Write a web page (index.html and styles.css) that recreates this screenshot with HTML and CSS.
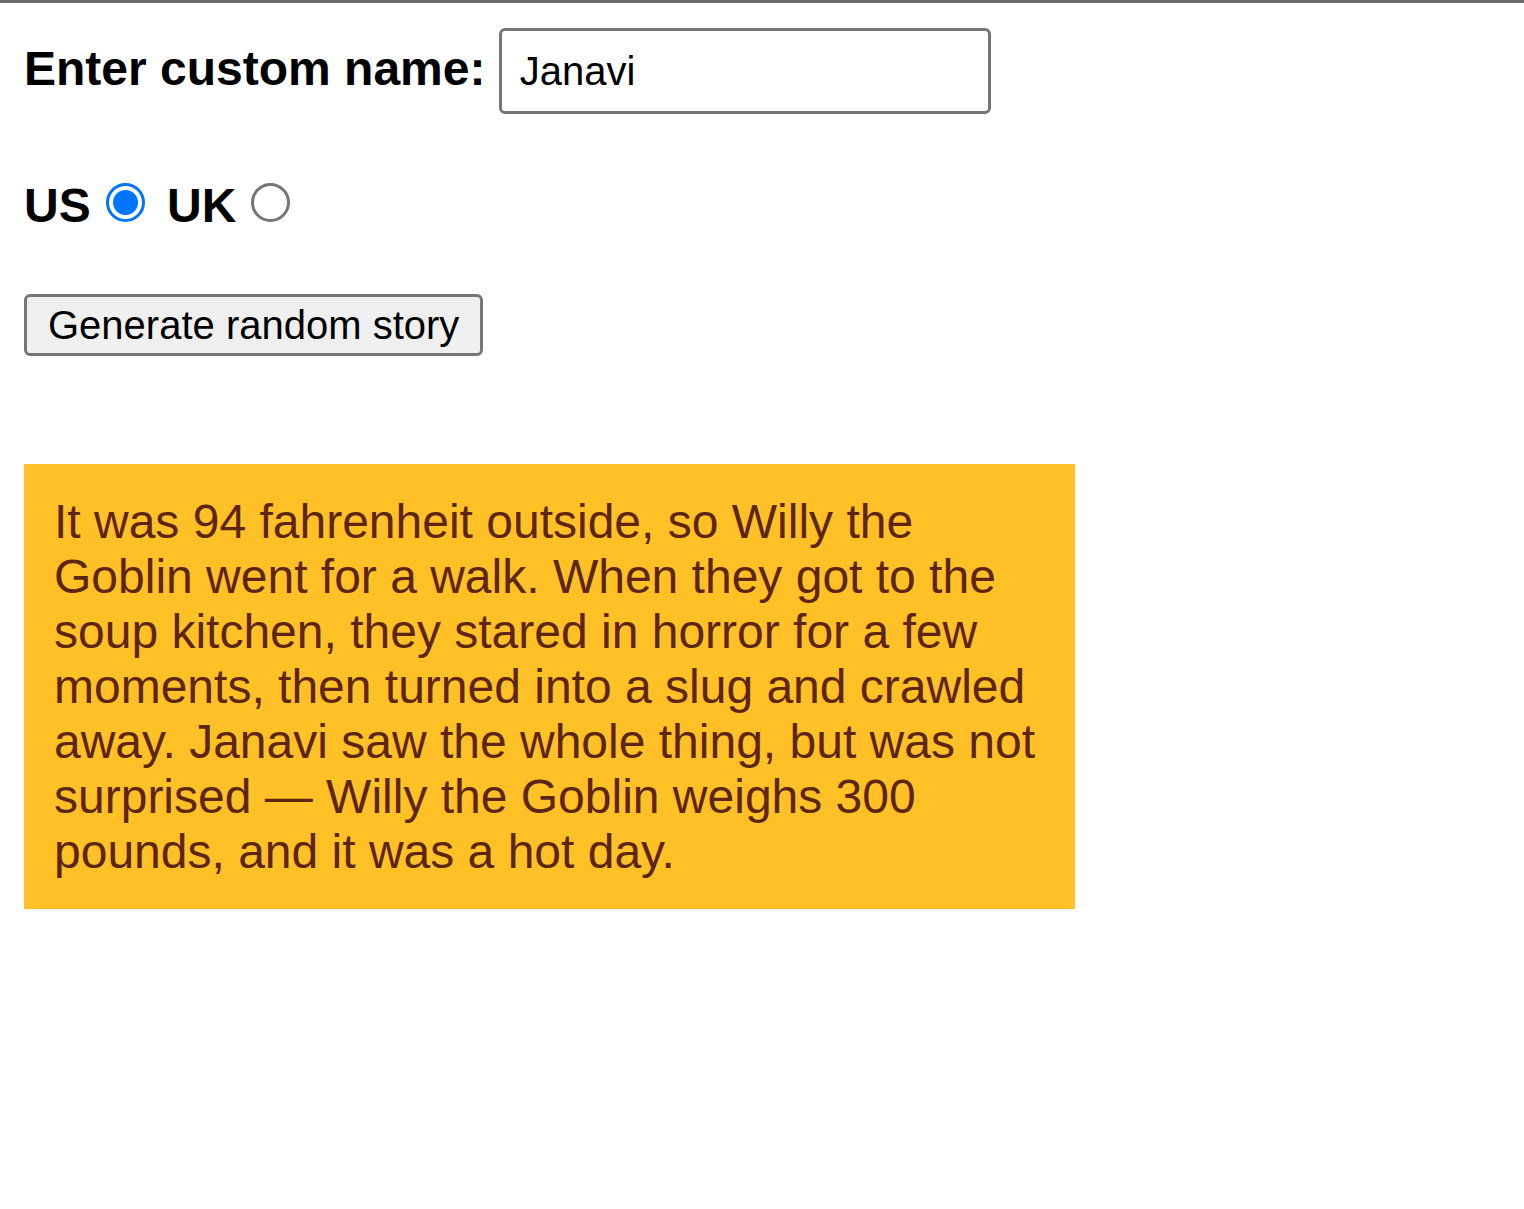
FILE: index.html
```html
<!DOCTYPE html>
<html lang="en">
<head>
<meta charset="utf-8">
<title>Silly story generator</title>
<link rel="stylesheet" href="styles.css">
</head>
<body>
<div class="row">
  <label class="lbl" for="customname">Enter custom name:</label>
  <input class="name-input" id="customname" type="text" value="Janavi">
</div>
<div class="row radios">
  <label class="lbl" for="us">US</label><input class="radio" id="us" type="radio" name="ukus" value="us" checked>
  <label class="lbl" for="uk">UK</label><input class="radio" id="uk" type="radio" name="ukus" value="uk">
</div>
<div class="row">
  <button class="randomize" type="button">Generate random story</button>
</div>
<p class="story">It was 94 fahrenheit outside, so Willy the Goblin went for a walk. When they got to the soup kitchen, they stared in horror for a few moments, then turned into a slug and crawled away. Janavi saw the whole thing, but was not surprised — Willy the Goblin weighs 300 pounds, and it was a hot day.</p>
</body>
</html>
```
FILE: styles.css
```css
html {
  border-top: 3px solid #6b6b6b;
  background: #fff;
}
body {
  margin: 25px 24px 24px;
  width: 1051px;
  font-family: "Liberation Sans", Arial, Helvetica, sans-serif;
  font-size: 48px;
  color: #000;
}
.row {
  padding-bottom: 60px;
}
.radios {
  padding-bottom: 61px;
}
.lbl {
  font-weight: bold;
}
.name-input {
  box-sizing: border-box;
  width: 492px;
  height: 86px;
  padding: 0 18px;
  margin: 0;
  border: 3px solid #767676;
  border-radius: 6px;
  font-family: "Liberation Sans", Arial, sans-serif;
  font-size: 40px;
  color: #000;
  background: #fff;
  outline: none;
}
.radio {
  appearance: none;
  -webkit-appearance: none;
  box-sizing: border-box;
  width: 39px;
  height: 39px;
  margin: 9px 9px 0 15px;
  border: 3px solid #767676;
  border-radius: 50%;
  background: #fff;
  vertical-align: baseline;
}
.radio:checked {
  border-color: #0075ff;
  background: radial-gradient(circle, #0075ff 0 12px, #fff 13px);
}
.randomize {
  box-sizing: border-box;
  height: 62px;
  padding: 0 21px;
  margin: 0;
  border: 3px solid #767676;
  border-radius: 6px;
  background: #efefef;
  font-family: "Liberation Sans", Arial, sans-serif;
  font-size: 40px;
  color: #000;
}
.story {
  margin: 48px 0;
  padding: 30px;
  background: #ffc125;
  color: #5e2612;
}
```
